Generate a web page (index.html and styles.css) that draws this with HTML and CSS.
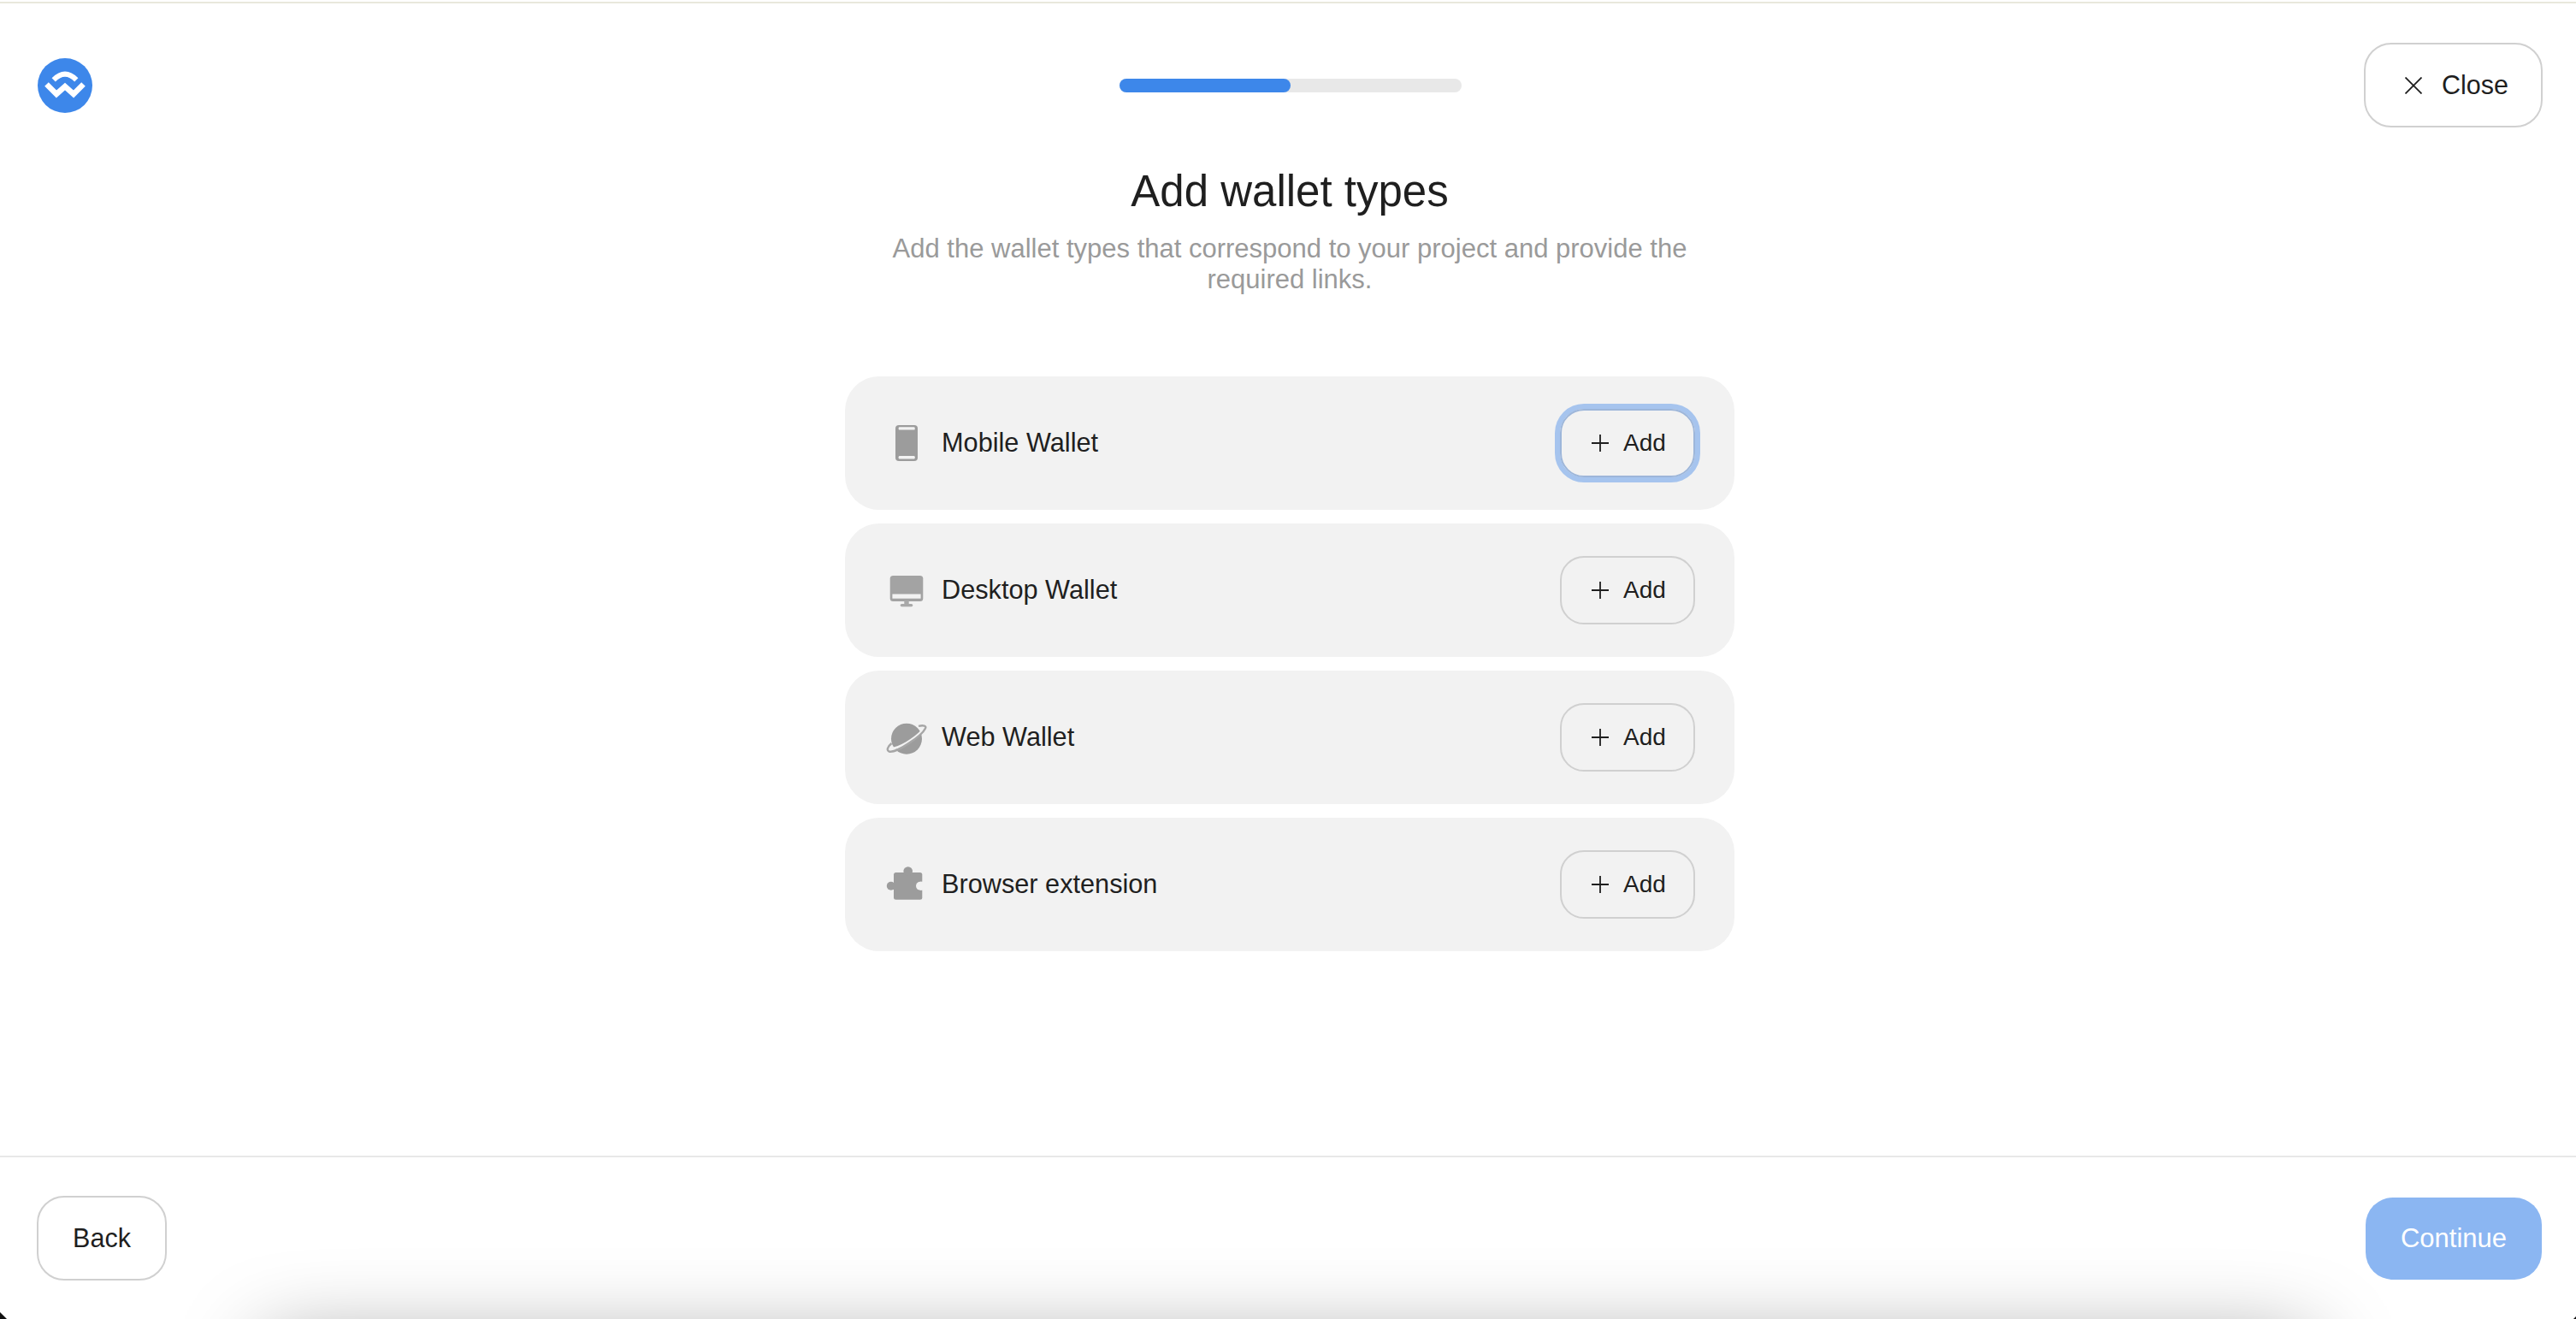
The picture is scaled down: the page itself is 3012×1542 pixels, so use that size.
FILE: index.html
```html
<!DOCTYPE html>
<html lang="en">
<head>
    <meta charset="UTF-8">
    <meta name="viewport" content="width=device-width, initial-scale=1.0">
    <title>Add wallet types</title>
    <link rel="stylesheet" href="styles.css">
</head>
<body>

<div class="page">
    <div class="top-line"></div>

    <header class="header">
        <svg class="logo" viewBox="0 0 64 64" width="64" height="64">
            <circle cx="32" cy="32" r="32" fill="#3d87ea"/>
            <path d="M18.7 25.3Q32 12 45.3 25.3" fill="none" stroke="#fff" stroke-width="6"/>
            <path d="M10.5 30.5L22 42L32 33L42 42L53.5 30.5" fill="none" stroke="#fff" stroke-width="6.5"/>
        </svg>
        <div class="progress"><div class="progress-fill"></div></div>
        <button class="btn close-btn">
            <svg viewBox="0 0 20 20" width="20" height="20"><path d="M0.5 0.5L19.5 19.5M19.5 0.5L0.5 19.5" stroke="#1f1f1f" stroke-width="1.8" fill="none"/></svg>
            Close
        </button>
    </header>

    <main class="main">
        <h1 class="title">Add wallet types</h1>
        <p class="subtitle">Add the wallet types that correspond to your project and provide the required links.</p>

        <div class="wallet-list">
            <div class="wallet-row">
                <div class="wallet-name">
                    <svg class="wallet-icon" viewBox="0 0 48 48" width="48" height="48">
                        <rect x="11" y="3" width="26" height="42" rx="4" fill="#9c9c9c"/>
                        <rect x="14.7" y="5.2" width="19" height="3.4" rx="1.2" fill="#f2f2f2"/>
                        <rect x="14.7" y="39" width="19" height="3.4" rx="1.2" fill="#f2f2f2"/>
                    </svg>
                    Mobile Wallet
                </div>
                <button class="btn add-btn focused">
                    <svg viewBox="0 0 20 20" width="20" height="20"><path d="M10 0V20M0 10H20" stroke="#1f1f1f" stroke-width="1.8" fill="none"/></svg>
                    Add
                </button>
            </div>
            <div class="wallet-row">
                <div class="wallet-name">
                    <svg class="wallet-icon" viewBox="0 0 48 48" width="48" height="48">
                        <rect x="4.7" y="7" width="38.6" height="30" rx="3.5" fill="#a3a3a3"/>
                        <rect x="7.4" y="28.5" width="33.2" height="5.2" fill="#f2f2f2"/>
                        <rect x="21.3" y="36" width="5.4" height="5" fill="#a9a9a9"/>
                        <rect x="16.7" y="40" width="14.6" height="3.2" rx="1.6" fill="#a9a9a9"/>
                    </svg>
                    Desktop Wallet
                </div>
                <button class="btn add-btn">
                    <svg viewBox="0 0 20 20" width="20" height="20"><path d="M10 0V20M0 10H20" stroke="#1f1f1f" stroke-width="1.8" fill="none"/></svg>
                    Add
                </button>
            </div>
            <div class="wallet-row">
                <div class="wallet-name">
                    <svg class="wallet-icon" viewBox="0 0 48 48" width="48" height="48">
                        <circle cx="24" cy="25.7" r="18" fill="#9c9c9c"/>
                        <path d="M5 37C14 38 34 26 44 14.5" fill="none" stroke="#f2f2f2" stroke-width="3"/>
                        <path d="M38 10.8C44 9.5 47.5 10.5 46 13.5C42 22 12 43 3.5 40.5C0.5 39.5 1.5 35 6.5 31" fill="none" stroke="#a6a6a6" stroke-width="2.4"/>
                    </svg>
                    Web Wallet
                </div>
                <button class="btn add-btn">
                    <svg viewBox="0 0 20 20" width="20" height="20"><path d="M10 0V20M0 10H20" stroke="#1f1f1f" stroke-width="1.8" fill="none"/></svg>
                    Add
                </button>
            </div>
            <div class="wallet-row">
                <div class="wallet-name">
                    <svg class="wallet-icon" viewBox="0 0 48 48" width="48" height="48">
                        <rect x="9" y="10" width="33.3" height="31.7" rx="2.5" fill="#9c9c9c"/>
                        <circle cx="25.7" cy="8.5" r="5.3" fill="#9c9c9c"/>
                        <circle cx="5.8" cy="25.7" r="5" fill="#9c9c9c"/>
                        <circle cx="40" cy="25.7" r="5" fill="#f2f2f2"/>
                        <rect x="40" y="20.7" width="3" height="10" fill="#f2f2f2"/>
                    </svg>
                    Browser extension
                </div>
                <button class="btn add-btn">
                    <svg viewBox="0 0 20 20" width="20" height="20"><path d="M10 0V20M0 10H20" stroke="#1f1f1f" stroke-width="1.8" fill="none"/></svg>
                    Add
                </button>
            </div>
        </div>
    </main>

    <footer class="footer">
        <button class="btn back-btn">Back</button>
        <button class="btn continue-btn">Continue</button>
    </footer>

    <div class="bottom-shadow"></div>
    <div class="corner corner-left"></div>
    <div class="corner corner-right"></div>
</div>

</body>
</html>
```

FILE: styles.css
```css
html, body {
    margin: 0;
    height: 100%;
    overflow: hidden;
    background-color: #fff;
}
.page {
    position: relative;
    display: flex;
    flex-direction: column;
    width: 3012px;
    height: 1542px;
    overflow: hidden;
    font-family: "Liberation Sans", Arial, sans-serif;
    color: #1f1f1f;
}
.top-line {
    height: 2px;
    margin-top: 2px;
    background-color: #e9e8dc;
}
.header {
    display: grid;
    grid-template-columns: 1fr 400px 1fr;
    align-items: center;
    width: 3016px;
    box-sizing: border-box;
    padding: 46px 43px 0 44px;
}
.logo {
    display: block;
}
.progress {
    height: 16px;
    border-radius: 8px;
    background-color: #e8e8e8;
}
.progress-fill {
    width: 50%;
    height: 100%;
    border-radius: 8px;
    background-color: #3d87ea;
}
.btn {
    display: inline-flex;
    align-items: center;
    justify-content: center;
    box-sizing: border-box;
    padding: 0;
    font-family: "Liberation Sans", Arial, sans-serif;
    font-size: 30.5px;
    color: #1f1f1f;
    background: transparent;
    border: 2px solid #d0d0d0;
    border-radius: 32px;
}
.close-btn {
    justify-self: end;
    gap: 23px;
    width: 209px;
    height: 99px;
    padding-left: 8px;
}
.main {
    flex: 1;
    width: 3016px;
    display: flex;
    flex-direction: column;
    align-items: center;
}
.title {
    margin: 45px 0 0;
    font-size: 51px;
    font-weight: 400;
    line-height: 60px;
}
.subtitle {
    width: 960px;
    margin: 19px 0 0;
    font-size: 31px;
    line-height: 36px;
    text-align: center;
    color: #9a9a9a;
}
.wallet-list {
    display: flex;
    flex-direction: column;
    gap: 16px;
    margin-top: 95px;
}
.wallet-row {
    display: flex;
    align-items: center;
    justify-content: space-between;
    box-sizing: border-box;
    width: 1040px;
    height: 156px;
    padding: 0 46px 0 48px;
    border-radius: 40px;
    background-color: #f2f2f2;
}
.wallet-name {
    display: flex;
    align-items: center;
    gap: 17px;
    font-size: 30.7px;
}
.wallet-icon {
    display: block;
}
.add-btn {
    gap: 17px;
    width: 158px;
    height: 80px;
    padding-left: 3px;
    border-radius: 28px;
    font-size: 28px;
}
.focused {
    border-color: #9db6da;
    box-shadow: 0 0 0 6px #a6c4ee;
}
.footer {
    display: flex;
    align-items: center;
    justify-content: space-between;
    box-sizing: border-box;
    height: 191px;
    padding: 0 40px 0 43px;
    border-top: 2px solid #e8e8e8;
}
.back-btn {
    width: 152px;
    height: 99px;
}
.continue-btn {
    width: 206px;
    height: 96px;
    border: none;
    font-size: 31px;
    color: #fff;
    background-color: #8bb6f2;
}
/* shadow of something sitting just under the window edge */
.bottom-shadow {
    position: absolute;
    left: 310px;
    right: 310px;
    top: 1570px;
    height: 100px;
    box-shadow: 0 0 100px rgba(0, 0, 0, 0.4);
}
.corner {
    position: absolute;
    bottom: 0;
    background-color: #111;
}
.corner-left {
    left: 0;
    width: 8px;
    height: 8px;
    clip-path: polygon(0 0, 100% 100%, 0 100%);
}
.corner-right {
    right: 0;
    width: 3px;
    height: 3px;
    clip-path: polygon(100% 0, 100% 100%, 0 100%);
}
```
